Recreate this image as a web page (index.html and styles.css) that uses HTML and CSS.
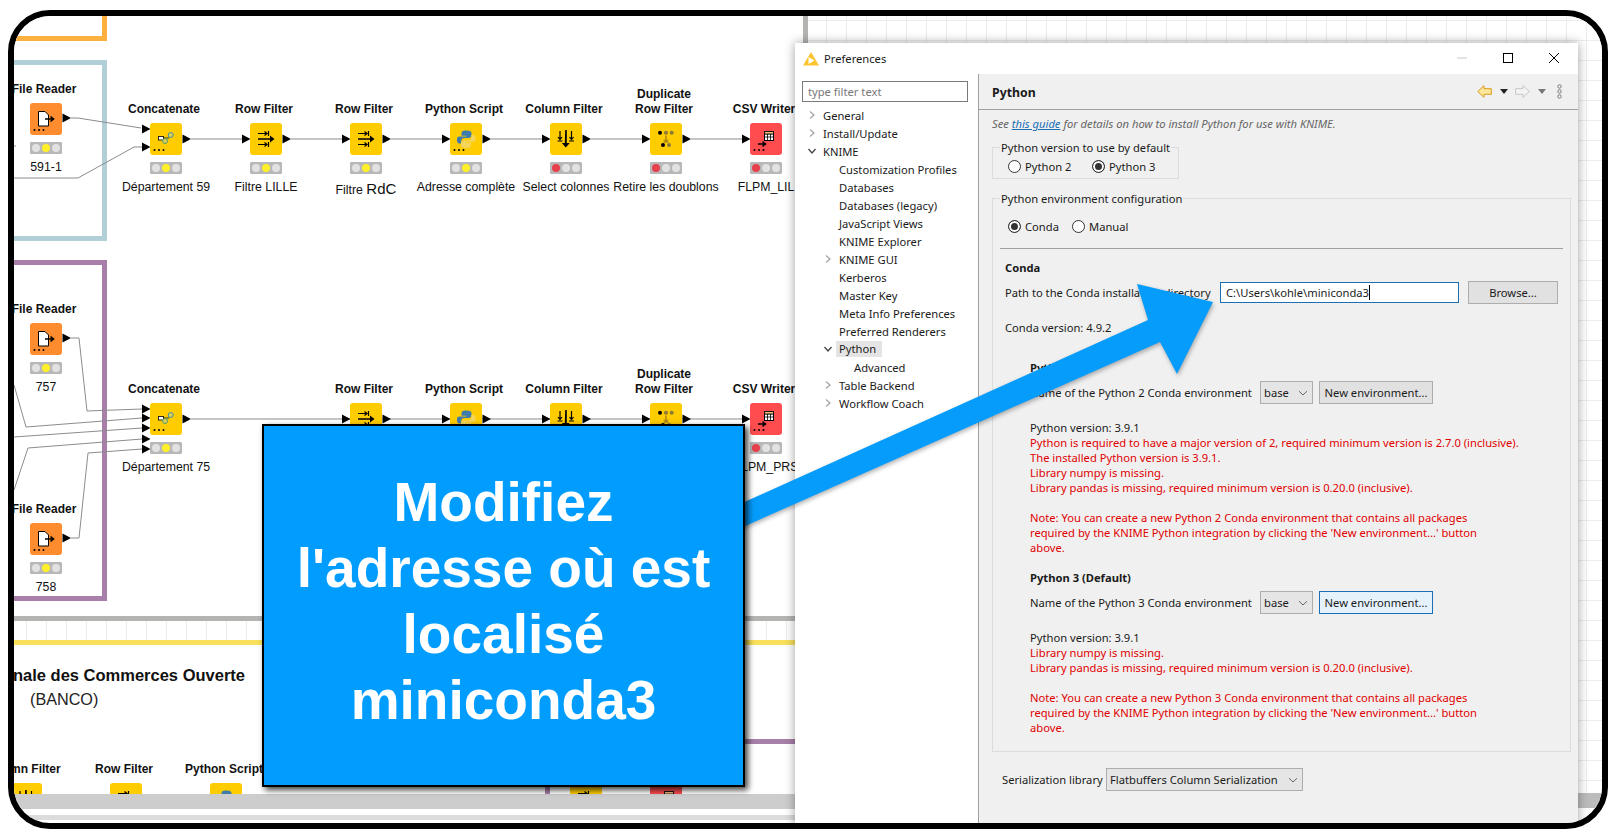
FILE: index.html
```html
<!DOCTYPE html>
<html lang="fr">
<head>
<meta charset="utf-8">
<title>KNIME Preferences</title>
<link rel="stylesheet" href="styles.css">
</head>
<body>
<svg class="defs" width="0" height="0" aria-hidden="true">
  <defs>
    <polygon id="tri" points="0,-4.5 8.5,0 0,4.5"/>
    <g id="dots"><circle cx="4.5" cy="27" r="1"/><circle cx="9" cy="27" r="1"/><circle cx="13.5" cy="27" r="1"/></g>
    <symbol id="i-reader" viewBox="0 0 32 32">
      <path d="M8.5 8.5h6.5l3.5 3.5v11h-10z" fill="#fff" stroke="#000"/>
      <path d="M15 16h8M20.5 13.5l3 2.5-3 2.5" fill="none" stroke="#000" stroke-width="1.6"/>
      <use href="#dots"/>
    </symbol>
    <symbol id="i-concat" viewBox="0 0 32 32">
      <rect x="8.5" y="13.500" width="5" height="3.500" fill="#fff" stroke="#000" stroke-width=".8"/>
      <path d="M13 15h6" stroke="#000" stroke-width=".8"/>
      <path d="M15 18l6-6" stroke="#6a8f6a" stroke-width=".8"/>
      <circle cx="20.7" cy="12" r="2.500" fill="#d8cf5a" stroke="#3f93a0"/>
      <circle cx="15" cy="18" r="2.500" fill="#d8cf5a" stroke="#58a06a"/>
      <use href="#dots"/>
    </symbol>
    <symbol id="i-filter" viewBox="0 0 32 32">
      <g fill="none" stroke="#000" stroke-width="1.2">
        <path d="M8 10.5h9M14.5 8.5l2.5 2-2.5 2M18.5 8v5"/>
        <path d="M8 21.5h9M14.5 19.5l2.5 2-2.5 2M18.5 19v5"/>
      </g>
      <path d="M8 15.200h12v-2.600l4.500 3.400-4.500 3.400v-2.600h-12z" fill="#000"/>
    </symbol>
    <symbol id="i-python" viewBox="0 0 32 32">
      <path d="M16 7.500c-4 0-4.500 1.500-4.500 3v2.200h4.700v.8h-6.700c-2 0-2.600 1.800-2.600 3.500s.8 3.500 2.600 3.500h1.700v-2.600c0-1.800 1.500-3 3.200-3h4.500c1.500 0 2.600-1.200 2.600-2.600v-2c0-2.100-1.900-2.800-5.500-2.800z" fill="#3f7cac"/>
      <path d="M16.500 25c4 0 4.500-1.500 4.500-3v-2.200h-4.700v-.8h6.700c2 0 2.600-1.800 2.600-3.500s-.8-3.500-2.600-3.500h-1.700v2.600c0 1.800-1.500 3-3.200 3h-4.500c-1.500 0-2.600 1.200-2.600 2.600v2c0 2.100 1.900 2.800 5.500 2.800z" fill="#f6d55c"/>
      <use href="#dots"/>
    </symbol>
    <symbol id="i-column" viewBox="0 0 32 32">
      <g fill="none" stroke="#000" stroke-width="1.2">
        <path d="M10 8v8.500M8 14l2 2.500 2-2.500M7.500 18h5"/>
        <path d="M21.500 8v8.500M19.500 14l2 2.500 2-2.500M19 18h5"/>
      </g>
      <path d="M15.200 7h1.600v13h3l-4 4.500-4-4.500h3z" fill="#000"/>
    </symbol>
    <symbol id="i-dup" viewBox="0 0 32 32">
      <circle cx="10" cy="9.700" r="2" fill="#000"/>
      <circle cx="16" cy="9.700" r="2" fill="#8a7a3a"/>
      <circle cx="21.700" cy="9.700" r="2" fill="#8a7a3a"/>
      <circle cx="13" cy="22" r="2" fill="#000"/>
      <circle cx="19" cy="22" r="2" fill="#8a7a3a"/>
      <path d="M16 12.500v5.500M14 16.500l2 2 2-2M13.500 19h5" fill="none" stroke="#8a6a1a"/>
    </symbol>
    <symbol id="i-csv" viewBox="0 0 32 32">
      <rect x="14.500" y="8.500" width="9" height="9" fill="#fff" stroke="#000"/>
      <path d="M14.500 11h9M14.500 14h9M17.500 11v6.500M20.500 11v6.500" stroke="#000" stroke-width=".8"/>
      <path d="M14.500 8.500h9V11h-9z" fill="#f5b97a" stroke="#000" stroke-width=".8"/>
      <path d="M8 21h7M12.500 18.700l3 2.300-3 2.300" fill="none" stroke="#000" stroke-width="1.500"/>
      <use href="#dots"/>
    </symbol>
    <symbol id="i-right" viewBox="0 0 10 10"><path d="M3 1.500l4 3.500-4 3.500" fill="none" stroke="#a6a6a6" stroke-width="1.300"/></symbol>
    <symbol id="i-down" viewBox="0 0 10 10"><path d="M1.500 3l3.500 4 3.500-4" fill="none" stroke="#444" stroke-width="1.300"/></symbol>
    <symbol id="i-combo" viewBox="0 0 10 10"><path d="M1 3.200l4 3.800 4-3.800" fill="none" stroke="#666"/></symbol>
  </defs>
</svg>

<div class="frame">
  <div class="left">
    <div class="canvas">
      <div class="box box-orange"></div>
      <div class="box box-teal"></div>
      <div class="box box-purple"></div>
      <svg class="wires" width="789" height="600" viewBox="14 16 789 600">
        <g class="wire">
          <path d="M14 146h2"/>
          <path d="M71 118h7l63 10"/>
          <path d="M14 178h64l56-31h8"/>
          <path d="M191 139h51M291 139h51M391 139h51M491 139h51M591 139h51M691 139h51"/>
          <path d="M71 338h8l8 73 55-2"/>
          <path d="M14 385l12 42 116-9"/>
          <path d="M14 437l128-9"/>
          <path d="M14 490l14-42 114-9"/>
          <path d="M71 538h8l9-85 54-4"/>
          <path d="M191 419h551"/>
        </g>
        <use href="#tri" x="62.500" y="118"/>
        <use href="#tri" x="62.500" y="338"/>
        <use href="#tri" x="62.500" y="538"/>
        <use href="#tri" x="142" y="129"/>
        <use href="#tri" x="142" y="147"/>
        <use href="#tri" x="182.500" y="139"/>
        <use href="#tri" x="242" y="139"/>
        <use href="#tri" x="282.500" y="139"/>
        <use href="#tri" x="342" y="139"/>
        <use href="#tri" x="382.500" y="139"/>
        <use href="#tri" x="442" y="139"/>
        <use href="#tri" x="482.500" y="139"/>
        <use href="#tri" x="542" y="139"/>
        <use href="#tri" x="582.500" y="139"/>
        <use href="#tri" x="642" y="139"/>
        <use href="#tri" x="682.500" y="139"/>
        <use href="#tri" x="742" y="139"/>
        <use href="#tri" x="142" y="409"/>
        <use href="#tri" x="142" y="418"/>
        <use href="#tri" x="142" y="428"/>
        <use href="#tri" x="142" y="439"/>
        <use href="#tri" x="142" y="449"/>
        <use href="#tri" x="182.500" y="419"/>
        <use href="#tri" x="342" y="419"/>
        <use href="#tri" x="382.500" y="419"/>
        <use href="#tri" x="442" y="419"/>
        <use href="#tri" x="482.500" y="419"/>
        <use href="#tri" x="542" y="419"/>
        <use href="#tri" x="582.500" y="419"/>
        <use href="#tri" x="642" y="419"/>
        <use href="#tri" x="682.500" y="419"/>
        <use href="#tri" x="742" y="419"/>
      </svg>

      <div class="node x-reader y-r1"><div class="nlabel">File Reader</div><svg class="nicon orange"><use href="#i-reader"/></svg><div class="lights"><i></i><i class="on"></i><i></i></div><div class="nname">591-1</div></div>
      <div class="node x-reader y-r2"><div class="nlabel">File Reader</div><svg class="nicon orange"><use href="#i-reader"/></svg><div class="lights"><i></i><i class="on"></i><i></i></div><div class="nname">757</div></div>
      <div class="node x-reader y-r3"><div class="nlabel">File Reader</div><svg class="nicon orange"><use href="#i-reader"/></svg><div class="lights"><i></i><i class="on"></i><i></i></div><div class="nname">758</div></div>

      <div class="node x-1 y-a"><div class="nlabel">Concatenate</div><svg class="nicon"><use href="#i-concat"/></svg><div class="lights"><i></i><i class="on"></i><i></i></div><div class="nname">Département 59</div></div>
      <div class="node x-2 y-a"><div class="nlabel">Row Filter</div><svg class="nicon"><use href="#i-filter"/></svg><div class="lights"><i></i><i class="on"></i><i></i></div><div class="nname">Filtre LILLE</div></div>
      <div class="node x-3 y-a"><div class="nlabel">Row Filter</div><svg class="nicon"><use href="#i-filter"/></svg><div class="lights"><i></i><i class="on"></i><i></i></div><div class="nname nudge">Filtre <span class="big">RdC</span></div></div>
      <div class="node x-4 y-a"><div class="nlabel">Python Script</div><svg class="nicon"><use href="#i-python"/></svg><div class="lights"><i></i><i class="on"></i><i></i></div><div class="nname">Adresse complète</div></div>
      <div class="node x-5 y-a"><div class="nlabel">Column Filter</div><svg class="nicon"><use href="#i-column"/></svg><div class="lights"><i class="err"></i><i></i><i></i></div><div class="nname">Select colonnes</div></div>
      <div class="node x-6 y-a"><div class="nlabel">Duplicate<br>Row Filter</div><svg class="nicon"><use href="#i-dup"/></svg><div class="lights"><i class="err"></i><i></i><i></i></div><div class="nname">Retire les doublons</div></div>
      <div class="node x-7 y-a"><div class="nlabel">CSV Writer</div><svg class="nicon red"><use href="#i-csv"/></svg><div class="lights"><i class="err"></i><i></i><i></i></div><div class="nname">FLPM_LIL</div></div>

      <div class="node x-1 y-b"><div class="nlabel">Concatenate</div><svg class="nicon"><use href="#i-concat"/></svg><div class="lights"><i></i><i class="on"></i><i></i></div><div class="nname">Département 75</div></div>
      <div class="node x-3 y-b"><div class="nlabel">Row Filter</div><svg class="nicon"><use href="#i-filter"/></svg></div>
      <div class="node x-4 y-b"><div class="nlabel">Python Script</div><svg class="nicon"><use href="#i-python"/></svg></div>
      <div class="node x-5 y-b"><div class="nlabel">Column Filter</div><svg class="nicon"><use href="#i-column"/></svg></div>
      <div class="node x-6 y-b"><div class="nlabel">Duplicate<br>Row Filter</div><svg class="nicon"><use href="#i-dup"/></svg></div>
      <div class="node x-7 y-b"><div class="nlabel">CSV Writer</div><svg class="nicon red"><use href="#i-csv"/></svg><div class="lights"><i class="err"></i><i></i><i></i></div><div class="nname">FLPM_PRS</div></div>
    </div>
    <div class="hsash"></div>
    <div class="strip"></div>
    <div class="yellowbar"></div>
    <div class="canvas2">
      <div class="box box-lower"></div>
      <div class="note-title">nale des Commerces Ouverte</div>
      <div class="note-sub">(BANCO)</div>
      <div class="node low-1"><div class="nlabel">mn Filter</div><svg class="nicon"><use href="#i-column"/></svg></div>
      <div class="node low-2"><div class="nlabel">Row Filter</div><svg class="nicon"><use href="#i-filter"/></svg></div>
      <div class="node low-3"><div class="nlabel">Python Script</div><svg class="nicon"><use href="#i-python"/></svg></div>
      <div class="node low-4"><svg class="nicon"><use href="#i-filter"/></svg></div>
      <div class="node low-5"><svg class="nicon red"><use href="#i-csv"/></svg></div>
    </div>
    <div class="hscroll"></div>
    <div class="gap"></div>
    <div class="track"></div>
  </div>
  <div class="vsash"></div>
  <div class="right">
    <div class="grid"></div>
    <div class="rscroll"></div>
  </div>

  <div class="dialog">
    <div class="titlebar">
      <svg class="appicon" width="16" height="14" viewBox="0 0 16 14"><path d="M8 0l8 13.500H0z" fill="#fbc531"/><path d="M5.500 5l6 3.500-6 3.500z" fill="#fff"/></svg>
      <span class="title">Preferences</span>
      <span class="winbtns">
        <svg width="12" height="12" viewBox="0 0 12 12"><path d="M1 6h10" stroke="#c8c8c8"/></svg>
        <svg width="12" height="12" viewBox="0 0 12 12"><rect x="1.500" y="1.500" width="9" height="9" fill="none" stroke="#000"/></svg>
        <svg width="12" height="12" viewBox="0 0 12 12"><path d="M1 1l10 10M11 1L1 11" stroke="#000"/></svg>
      </span>
    </div>
    <div class="dbody">
      <div class="tree">
        <div class="filter">type filter text</div>
        <div class="rows">
          <div class="row l0"><svg class="tw"><use href="#i-right"/></svg><span>General</span></div>
          <div class="row l0"><svg class="tw"><use href="#i-right"/></svg><span>Install/Update</span></div>
          <div class="row l0"><svg class="tw"><use href="#i-down"/></svg><span>KNIME</span></div>
          <div class="row l1"><span class="tw"></span><span>Customization Profiles</span></div>
          <div class="row l1"><span class="tw"></span><span>Databases</span></div>
          <div class="row l1"><span class="tw"></span><span>Databases (legacy)</span></div>
          <div class="row l1"><span class="tw"></span><span>JavaScript Views</span></div>
          <div class="row l1"><span class="tw"></span><span>KNIME Explorer</span></div>
          <div class="row l1"><svg class="tw"><use href="#i-right"/></svg><span>KNIME GUI</span></div>
          <div class="row l1"><span class="tw"></span><span>Kerberos</span></div>
          <div class="row l1"><span class="tw"></span><span>Master Key</span></div>
          <div class="row l1"><span class="tw"></span><span>Meta Info Preferences</span></div>
          <div class="row l1"><span class="tw"></span><span>Preferred Renderers</span></div>
          <div class="row l1"><svg class="tw"><use href="#i-down"/></svg><span class="sel">Python</span></div>
          <div class="row l2"><span class="tw"></span><span>Advanced</span></div>
          <div class="row l1"><svg class="tw"><use href="#i-right"/></svg><span>Table Backend</span></div>
          <div class="row l1"><svg class="tw"><use href="#i-right"/></svg><span>Workflow Coach</span></div>
        </div>
      </div>
      <div class="page">
        <div class="phead">
          <span class="ptitle">Python</span>
          <span class="tools">
            <svg width="15" height="13" viewBox="0 0 15 13"><path d="M.7 6.500L7 .7v3h7.300v5.600H7v3z" fill="#fde79a" stroke="#d99a1c"/></svg>
            <svg class="t-drop" width="8" height="5" viewBox="0 0 8 5"><path d="M0 0h8L4 5z" fill="#222"/></svg>
            <svg class="t-fwd" width="15" height="13" viewBox="0 0 15 13"><path d="M14.300 6.500L8 .7v3H.7v5.600H8v3z" fill="#f4f4f4" stroke="#c6c6c6"/></svg>
            <svg class="t-drop" width="8" height="5" viewBox="0 0 8 5"><path d="M0 0h8L4 5z" fill="#777"/></svg>
            <svg class="t-menu" width="5" height="15" viewBox="0 0 5 15"><g fill="none" stroke="#777"><circle cx="2.500" cy="2.500" r="1.700"/><circle cx="2.500" cy="7.500" r="1.700"/><circle cx="2.500" cy="12.500" r="1.700"/></g></svg>
          </span>
        </div>
        <div class="see">See <a class="guide">this guide</a> for details on how to install Python for use with KNIME.</div>
        <div class="group g1">
          <div class="legend">Python version to use by default</div>
          <div class="radios r1">
            <span class="radio w-py"><i class="rb"></i>Python 2</span>
            <span class="radio w-py"><i class="rb on"></i>Python 3</span>
          </div>
        </div>
        <div class="group g2">
          <div class="legend">Python environment configuration</div>
          <div class="radios r2">
            <span class="radio w-conda"><i class="rb on"></i>Conda</span>
            <span class="radio"><i class="rb"></i>Manual</span>
          </div>
          <div class="hr"></div>
          <div class="conda">
            <div class="strong">Conda</div>
            <div class="pathrow">
              <span class="pathlabel">Path to the Conda installation directory</span>
              <div class="pathinput">C:\Users\kohle\miniconda3<i class="caret"></i></div>
              <button class="btn browse">Browse...</button>
            </div>
            <div class="version">Conda version: 4.9.2</div>
          </div>
          <div class="env">
            <div class="strong">Python 2</div>
            <div class="envrow">
              <span class="envlabel">Name of the Python 2 Conda environment</span>
              <div class="combo c-base">base<svg class="cv"><use href="#i-combo"/></svg></div>
              <button class="btn newenv">New environment...</button>
            </div>
            <div class="msg">Python version: 3.9.1
              <div class="red">Python is required to have a major version of 2, required minimum version is 2.7.0 (inclusive).<br>The installed Python version is 3.9.1.<br>Library numpy is missing.<br>Library pandas is missing, required minimum version is 0.20.0 (inclusive).</div>
              <div class="red note">Note: You can create a new Python 2 Conda environment that contains all packages<br>required by the KNIME Python integration by clicking the 'New environment...' button<br>above.</div>
            </div>
          </div>
          <div class="env e3">
            <div class="strong">Python 3 (Default)</div>
            <div class="envrow">
              <span class="envlabel">Name of the Python 3 Conda environment</span>
              <div class="combo c-base">base<svg class="cv"><use href="#i-combo"/></svg></div>
              <button class="btn newenv focus">New environment...</button>
            </div>
            <div class="msg">Python version: 3.9.1
              <div class="red">Library numpy is missing.<br>Library pandas is missing, required minimum version is 0.20.0 (inclusive).</div>
              <div class="red note">Note: You can create a new Python 3 Conda environment that contains all packages<br>required by the KNIME Python integration by clicking the 'New environment...' button<br>above.</div>
            </div>
          </div>
        </div>
        <div class="serial">
          <span class="seriallabel">Serialization library</span>
          <div class="combo c-serial">Flatbuffers Column Serialization<svg class="cv"><use href="#i-combo"/></svg></div>
        </div>
      </div>
    </div>
  </div>

  <svg class="arrow" width="1588" height="807" viewBox="14 16 1588 807">
    <polygon points="700,522 1148,320 1137,284 1213,302 1177,374 1160,342 700,546"/>
  </svg>

  <div class="callout">Modifiez<br>l'adresse où est<br>localisé<br>miniconda3</div>
</div>
</body>
</html>
```

FILE: styles.css
```css
* { box-sizing: border-box; }
html, body { margin: 0; padding: 0; background: #fff; overflow: hidden; }
.defs { position: absolute; }

.frame {
  position: relative;
  display: flex;
  width: 1600px;
  height: 819px;
  margin: 10px 0 0 8px;
  border: 6px solid #000;
  border-radius: 42px;
  overflow: hidden;
  background: #fff;
  font-family: "Liberation Sans", Arial, sans-serif;
}

/* left: workflow editors */
.left { display: flex; flex-direction: column; flex: 0 0 789px; }
.canvas { position: relative; flex: 0 0 600px; background: #fff; }
.hsash { flex: 0 0 5px; background: #b4b4b2; }
.strip {
  flex: 0 0 19px;
  background-color: #fff;
  background-image: linear-gradient(90deg, #ececec 1px, transparent 1px);
  background-size: 20px 20px;
  background-position: 12px 0;
}
.yellowbar { flex: 0 0 5px; background: #f8e05a; }
.canvas2 { position: relative; flex: 0 0 149px; overflow: hidden; background: #fff; }
.hscroll { flex: 0 0 15px; background: #cdcdcd; }
.gap { flex: 0 0 6px; background: #fff; }
.track { flex: 0 0 5px; background: #dcdcdc; }
.vsash { flex: 0 0 5px; background: #b4b4b2; }
.right { display: flex; flex-direction: column; flex: 1 1 auto; }
.grid {
  flex: 0 0 777px;
  background-color: #fff;
  background-image: linear-gradient(#ececec 1px, transparent 1px), linear-gradient(90deg, #ececec 1px, transparent 1px);
  background-size: 20px 20px;
  background-position: 18px 4px;
}
.rscroll { flex: 0 0 15px; background: #bcbcbc; }

.box { position: absolute; border: 5px solid; }
.box-orange { left: -20px; top: -20px; width: 113px; height: 45px; border-color: #fbb040; }
.box-teal { left: -20px; top: 44px; width: 113px; height: 181px; border-color: #b2ced6; }
.box-purple { left: -20px; top: 244px; width: 113px; height: 341px; border-color: #a87fa8; }
.box-lower { left: 531px; top: 94px; width: 266px; height: 100px; border-color: #a87fa8; }

.wires { position: absolute; left: 0; top: 0; }
.wire { fill: none; stroke: #8c8c8c; stroke-width: 1; }

.node {
  position: absolute;
  display: flex;
  flex-direction: column;
  align-items: center;
  width: 100px;
  font-size: 12.300px;
  color: #111;
}
.nlabel {
  display: flex;
  align-items: flex-end;
  justify-content: center;
  height: 31px;
  margin-bottom: 6px;
  padding-right: 4px;
  font-size: 12px;
  font-weight: 700;
  line-height: 15px;
  text-align: center;
  white-space: nowrap;
}
.nicon { flex: none; width: 32px; height: 32px; border-radius: 3px; background: #ffcc00; }
.nicon.orange { background: #ff8c2e; }
.nicon.red { background: #ff4d4f; }
.lights {
  display: flex;
  align-items: center;
  justify-content: space-evenly;
  width: 32px;
  height: 12px;
  margin-top: 7px;
  border-radius: 1px;
  background: #b8b8b8;
}
.lights i { width: 8px; height: 8px; border-radius: 50%; background: #e2e2e2; }
.lights i.on { background: #fff02a; }
.lights i.err { background: #e8404c; }
.nname { margin-top: 6px; line-height: 15px; white-space: nowrap; }
.nname.nudge { margin-top: 7px; }
.big { font-size: 15px; }

.x-reader { left: -18px; }
.x-1 { left: 102px; } .x-2 { left: 202px; } .x-3 { left: 302px; } .x-4 { left: 402px; }
.x-5 { left: 502px; } .x-6 { left: 602px; } .x-7 { left: 702px; }
.y-r1 { top: 50px; } .y-r2 { top: 270px; } .y-r3 { top: 470px; }
.y-a { top: 70px; } .y-b { top: 350px; }
.low-1, .low-2, .low-3, .low-4, .low-5 { top: 101px; }
.low-1 { left: -38px; } .low-2 { left: 62px; } .low-3 { left: 162px; }
.low-1 .nlabel { align-self: flex-start; margin-left: 34px; padding-right: 0; }
.low-4 { left: 522px; padding-top: 37px; } .low-5 { left: 602px; padding-top: 37px; }

.note-title { position: absolute; right: 558px; top: 21px; font-size: 16.500px; font-weight: 700; line-height: 18px; white-space: nowrap; color: #111; }
.note-sub { position: absolute; left: 16px; top: 45px; font-size: 16.200px; line-height: 18px; color: #222; }

/* dialog */
.dialog {
  position: absolute;
  left: 781px;
  top: 27px;
  display: flex;
  flex-direction: column;
  width: 783px;
  height: 790px;
  background: #f0f0f0;
  box-shadow: 0 0 10px rgba(0, 0, 0, .38);
  font-family: "Noto Sans", "Open Sans", sans-serif;
  font-size: 11.200px;
  line-height: 15px;
  color: #1a1a1a;
}
.titlebar { display: flex; align-items: center; flex: 0 0 31px; padding-left: 8px; background: #fff; }
.appicon { margin-right: 5px; }
.title { flex: 1; font-size: 11.200px; }
.winbtns { display: flex; gap: 34px; align-items: center; margin-top: -2px; padding-right: 18px; }
.dbody { display: flex; flex: 1; min-height: 0; }

.tree { flex: 0 0 184px; padding-top: 7px; background: #fff; border-right: 1px solid #a0a0a0; }
.filter { width: 166px; height: 21px; margin-left: 7px; padding-left: 5px; border: 1px solid #7a7a7a; line-height: 19px; color: #777; }
.rows { margin-top: 4px; }
.row { display: flex; align-items: center; height: 18px; white-space: nowrap; }
.row.l0 { padding-left: 10px; }
.row.l1 { padding-left: 26px; }
.row.l2 { padding-left: 41px; }
.tw { flex: none; width: 14px; height: 10px; margin-right: 4px; }
.sel { margin-left: -3px; padding: 0 6px 0 3px; background: #e4e4e4; line-height: 16px; }

.page { flex: 1; padding-left: 13px; min-width: 0; }
.phead { display: flex; align-items: center; justify-content: space-between; height: 36px; margin-left: -13px; padding: 2px 16px 0 13px; border-bottom: 1px solid #a0a0a0; }
.ptitle { font-size: 12.300px; font-weight: 700; }
.tools { display: flex; align-items: center; gap: 7px; margin-top: -2px; }
.t-drop { margin-left: 1px; }
.t-fwd { margin-left: 0; }
.t-menu { margin-left: 4px; }
.see { margin-top: 6px; font-style: italic; color: #666; }
.guide { color: #1a6fb5; text-decoration: underline; }

.group { border: 1px solid #dcdcdc; }
.g1 { width: 187px; height: 32px; margin-top: 16px; }
.g2 { width: 579px; margin-top: 19px; padding: 0 7px 16px; }
.legend { width: fit-content; margin: -8px 0 0 7px; padding: 0 1px; background: #f0f0f0; }
.g2 .legend { margin-left: 0; }
.radios { display: flex; }
.r1 { margin: 4px 0 0 15px; }
.r2 { margin-top: 13px; padding-left: 8px; }
.w-py { flex: 0 0 84px; }
.w-conda { flex: 0 0 64px; }
.radio { display: flex; align-items: center; gap: 4px; white-space: nowrap; }
.rb { flex: none; width: 13px; height: 13px; border: 1px solid #333; border-radius: 50%; background: #fff; }
.rb.on { background: #333; box-shadow: inset 0 0 0 2px #fff; }

.hr { height: 1px; margin-top: 14px; background: #a0a0a0; }
.conda { padding-left: 5px; }
.strong { font-weight: 700; }
.conda .strong { margin-top: 11px; }
.pathrow { display: flex; align-items: center; height: 23px; margin-top: 6px; }
.pathlabel { flex: 0 0 215px; white-space: nowrap; }
.pathinput { flex: 0 0 239px; display: flex; align-items: center; height: 21px; padding-left: 5px; border: 1px solid #1a6fb5; background: #fff; }
.caret { width: 1px; height: 15px; background: #000; }
.btn { margin: 0; padding: 0; height: 23px; border: 1px solid #adadad; background: #e1e1e1; font: inherit; color: inherit; }
.browse { flex: 0 0 90px; margin-left: 9px; }
.version { margin-top: 16px; }

.env { padding-left: 30px; margin-top: 25px; }
.env.e3 { margin-top: 15px; }
.envrow { display: flex; align-items: center; height: 23px; margin-top: 6px; }
.envlabel { flex: 0 0 230px; white-space: nowrap; }
.combo { display: flex; align-items: center; justify-content: space-between; height: 23px; padding: 0 4px 0 3px; border: 1px solid #adadad; background: #e5e5e5; }
.c-base { flex: 0 0 53px; }
.cv { flex: none; width: 10px; height: 10px; }
.newenv { flex: 0 0 114px; margin-left: 6px; }
.newenv.focus { border-color: #1a6fb5; background: #e5f1fb; }
.msg { margin-top: 16px; }
.red { color: #e00000; }
.red.note { margin-top: 15px; }

.serial { display: flex; align-items: center; height: 23px; margin: 16px 0 0 10px; }
.seriallabel { flex: 0 0 104px; white-space: nowrap; }
.c-serial { flex: 0 0 197px; }

/* overlays */
.arrow { position: absolute; left: 0; top: 0; pointer-events: none; filter: drop-shadow(1px 2px 2px rgba(0, 0, 0, .3)); }
.arrow polygon { fill: #059cfb; }
.callout {
  position: absolute;
  left: 248px;
  top: 408px;
  display: flex;
  align-items: center;
  justify-content: center;
  width: 483px;
  height: 363px;
  padding-bottom: 9px;
  border: 2px solid #000;
  background: #009dff;
  box-shadow: 3px 3px 6px rgba(0, 0, 0, .75);
  color: #fff;
  font-size: 55px;
  font-weight: 700;
  line-height: 66px;
  text-align: center;
}
```
